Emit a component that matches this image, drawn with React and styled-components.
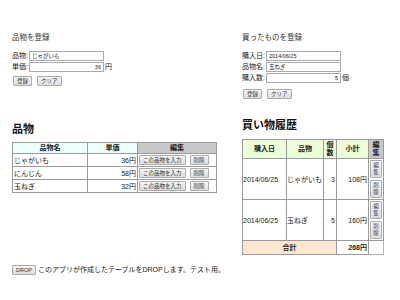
import styled, { createGlobalStyle } from "styled-components";

const GlobalStyle = createGlobalStyle`
  html, body {
    margin: 0;
    padding: 0;
    background: #fff;
  }
  body {
    font-family: "Liberation Sans", "Noto Sans CJK JP", sans-serif;
    font-size: 7px;
    color: #222;
  }
`;

const Page = styled.div`
  width: 400px;
  height: 300px;
  box-sizing: border-box;
  padding: 33px 0 0 12px;
  overflow: hidden;
`;

const Columns = styled.div`
  display: flex;
  align-items: flex-start;
`;

const Column = styled.div`
  width: ${(p) => p.$width}px;
  display: flex;
  flex-direction: column;
  align-items: flex-start;
`;

const FormTitle = styled.div`
  font-size: 7.5px;
  line-height: 9px;
  margin-bottom: 9px;
  color: #333;
`;

const Field = styled.div`
  display: flex;
  align-items: center;
  height: 10px;
  margin-bottom: 1px;
  white-space: nowrap;
  line-height: 10px;
`;

const Input = styled.input`
  width: 75px;
  height: 10px;
  box-sizing: border-box;
  margin: 0 1px 0 1px;
  padding: 0 2px;
  border: 1px solid #a9a9a9;
  background: #fff;
  font-family: inherit;
  font-size: 5.5px;
  color: #222;
  text-align: ${(p) => (p.$right ? "right" : "left")};
  outline: none;
`;

const ButtonRow = styled.div`
  display: flex;
  gap: 5px;
  margin-top: ${(p) => p.$top || 3}px;
  padding-left: 1px;
`;

const Button = styled.button`
  height: ${(p) => (p.$tall ? "auto" : "10px")};
  width: ${(p) => (p.$narrow ? "12px" : "auto")};
  box-sizing: border-box;
  margin: 0;
  padding: ${(p) => (p.$narrow ? "1px 0" : "0 3px")};
  border: 1px solid #acacac;
  border-radius: 1px;
  background: linear-gradient(#f4f4f4, #dedede);
  font-family: inherit;
  font-size: 5.5px;
  line-height: ${(p) => (p.$narrow ? "7px" : "8px")};
  color: #333;
  white-space: ${(p) => (p.$narrow ? "normal" : "nowrap")};
  word-break: break-all;
`;

const Heading = styled.h2`
  margin: ${(p) => p.$top}px 0 ${(p) => p.$bottom}px 0;
  font-size: 11px;
  line-height: 13px;
  font-weight: bold;
  color: #111;
`;

const Table = styled.table`
  width: ${(p) => p.$width}px;
  table-layout: fixed;
  border-collapse: collapse;
  border: 1px solid #b5b5b5;
  font-size: 7px;
`;

const Th = styled.th`
  width: ${(p) => p.$w}px;
  box-sizing: border-box;
  border: 1px solid #9a9a9a;
  background: ${(p) => p.$bg};
  padding: ${(p) => p.$pad || "1px 1px"};
  line-height: 8px;
  font-weight: bold;
  text-align: center;
  color: #222;
  word-break: break-all;
`;

const Td = styled.td`
  box-sizing: border-box;
  border: 1px solid #9a9a9a;
  background: ${(p) => p.$bg || "#fff"};
  padding: ${(p) => p.$pad || "1px 1px"};
  height: ${(p) => p.$h || "auto"}px;
  line-height: 9px;
  text-align: ${(p) => p.$align || "left"};
  font-weight: ${(p) => (p.$bold ? "bold" : "normal")};
  vertical-align: middle;
  white-space: nowrap;
  overflow: hidden;
`;

const CellButtons = styled.div`
  display: flex;
  flex-direction: ${(p) => (p.$stack ? "column" : "row")};
  align-items: center;
  gap: ${(p) => (p.$stack ? "2px" : "4px")};
  padding: ${(p) => (p.$stack ? "1px 0" : "0 1px")};
`;

const Footer = styled.div`
  display: flex;
  align-items: center;
  gap: 2px;
  margin-top: 10px;
  line-height: 10px;
  white-space: nowrap;
`;

const items = [
  { name: "じゃがいも", price: 36 },
  { name: "にんじん", price: 58 },
  { name: "玉ねぎ", price: 32 },
];

const history = [
  { date: "2014/06/25", name: "じゃがいも", qty: 3, sub: 108 },
  { date: "2014/06/25", name: "玉ねぎ", qty: 5, sub: 160 },
];

export default function App() {
  const total = history.reduce((s, h) => s + h.sub, 0);
  return (
    <Page>
      <GlobalStyle />
      <Columns>
        <Column $width={230}>
          <FormTitle>品物を登録</FormTitle>
          <Field>
            品物:
            <Input defaultValue="じゃがいも" />
          </Field>
          <Field>
            単価:
            <Input $right defaultValue="36" />円
          </Field>
          <ButtonRow>
            <Button>登録</Button>
            <Button>クリア</Button>
          </ButtonRow>

          <Heading $top={37} $bottom={6}>
            品物
          </Heading>
          <Table $width={204}>
            <thead>
              <tr>
                <Th $w={75} $bg="#efffff">品物名</Th>
                <Th $w={50} $bg="#efffff">単価</Th>
                <Th $w={79} $bg="#c9c9c9">編集</Th>
              </tr>
            </thead>
            <tbody>
              {items.map((it) => (
                <tr key={it.name}>
                  <Td $h={13}>{it.name}</Td>
                  <Td $align="right">{it.price}円</Td>
                  <Td $pad="1px 0">
                    <CellButtons>
                      <Button>この品物を入力</Button>
                      <Button>削除</Button>
                    </CellButtons>
                  </Td>
                </tr>
              ))}
            </tbody>
          </Table>
        </Column>

        <Column $width={150}>
          <FormTitle>買ったものを登録</FormTitle>
          <Field>
            購入日:
            <Input defaultValue="2014/06/25" />
          </Field>
          <Field>
            品物名:
            <Input defaultValue="玉ねぎ" />
          </Field>
          <Field>
            購入数:
            <Input $right defaultValue="5" />個
          </Field>
          <ButtonRow $top={5}>
            <Button>登録</Button>
            <Button>クリア</Button>
          </ButtonRow>

          <Heading $top={20} $bottom={7}>
            買い物履歴
          </Heading>
          <Table $width={141}>
            <thead>
              <tr>
                <Th $w={44} $bg="#ecfdd9">購入日</Th>
                <Th $w={37} $bg="#ecfdd9">品物</Th>
                <Th $w={13} $bg="#ecfdd9" $pad="1px 0">個数</Th>
                <Th $w={32} $bg="#ecfdd9">小計</Th>
                <Th $w={15} $bg="#c9c9c9" $pad="1px 2px">編集</Th>
              </tr>
            </thead>
            <tbody>
              {history.map((h, i) => (
                <tr key={i}>
                  <Td $pad="1px 0">{h.date}</Td>
                  <Td $pad="1px 0">{h.name}</Td>
                  <Td $align="right">{h.qty}</Td>
                  <Td $align="right">{h.sub}円</Td>
                  <Td $pad="0 1px" $bg="#fff">
                    <CellButtons $stack>
                      <Button $narrow $tall>編集</Button>
                      <Button $narrow $tall>削除</Button>
                    </CellButtons>
                  </Td>
                </tr>
              ))}
              <tr>
                <Td colSpan={3} $align="center" $bold $bg="#fde6d2" $h={14}>
                  合計
                </Td>
                <Td $align="right" $bold>
                  {total}円
                </Td>
              </tr>
            </tbody>
          </Table>
        </Column>
      </Columns>

      <Footer>
        <Button>DROP</Button>
        このアプリが作成したテーブルをDROPします。テスト用。
      </Footer>
    </Page>
  );
}
